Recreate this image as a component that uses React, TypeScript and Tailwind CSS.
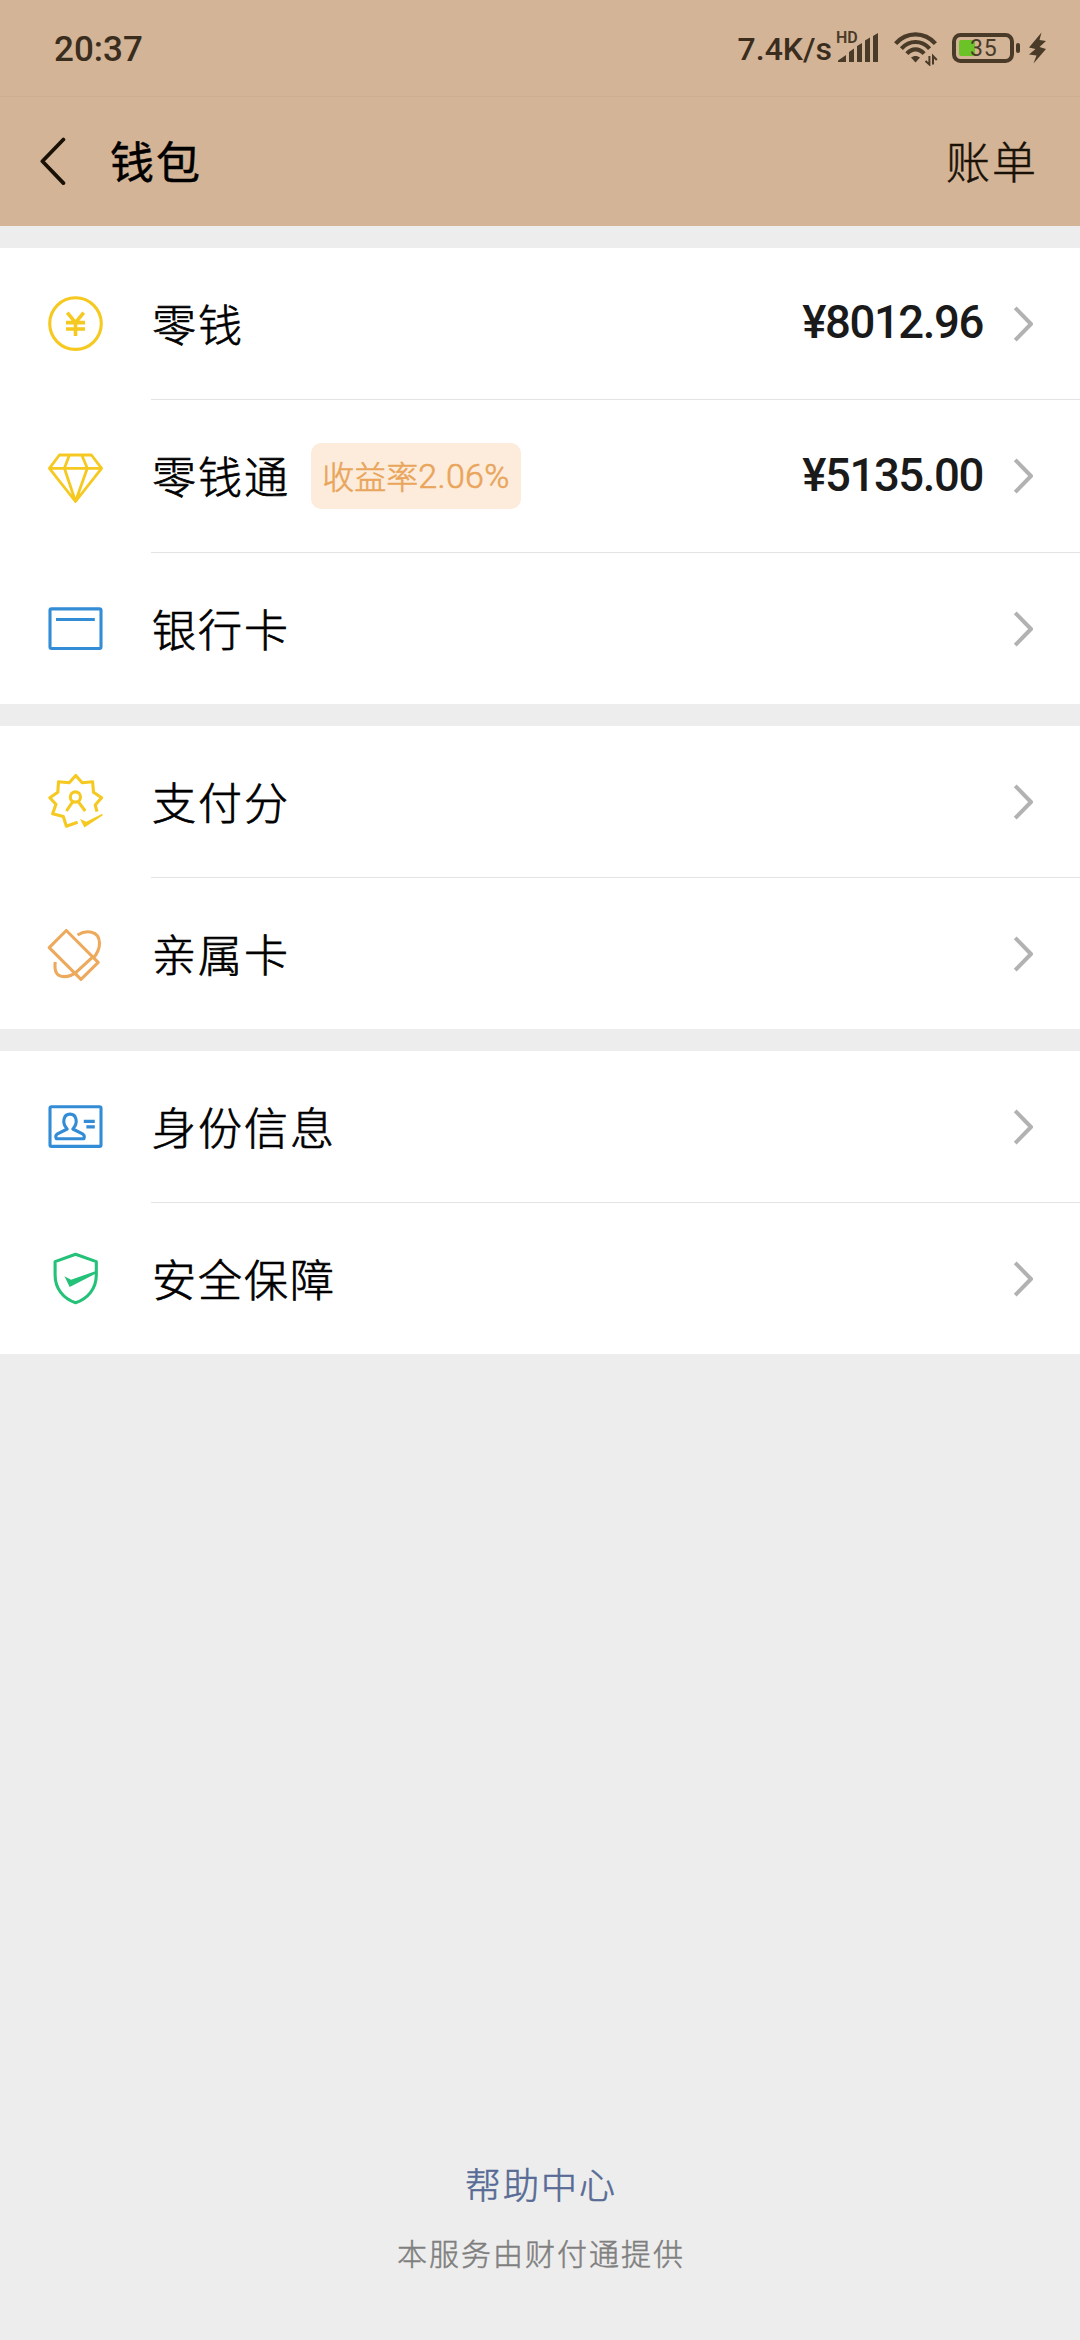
import type { ReactNode } from "react";

const yellow = "#f5c920";
const blue = "#338cd6";

function Icon({ color, children }: { color: string; children: ReactNode }) {
  return (
    <svg className="h-[60px] w-[60px] shrink-0" viewBox="0 0 60 60" fill="none" stroke={color} strokeWidth="3.1" strokeLinejoin="round">
      {children}
    </svg>
  );
}

const CoinIcon = () => (
  <Icon color={yellow}>
    <circle cx="30.5" cy="29.6" r="25.8" />
    <path d="M22.3 18.6 L30.5 28.6 L38.7 18.6 M30.5 28.6 V42 M21 28.6 H40 M21 35 H40" strokeWidth="3.6" strokeLinejoin="miter" />
  </Icon>
);

const DiamondIcon = () => (
  <Icon color={yellow}>
    <path d="M14.4 8 H46.4 L56.6 21.3 L30.5 54.5 L4.4 21.3 Z M4.4 21.3 H56.6 M24.4 8 L19.4 21.3 L30.5 54.5 L42.3 21.3 L36.8 8" strokeWidth="2.8" />
  </Icon>
);

const BankCardIcon = () => (
  <Icon color={blue}>
    <rect x="5" y="9.9" width="51" height="39.6" rx="1.5" />
    <path d="M11 20.5 H49.8" />
  </Icon>
);

const ScoreIcon = () => (
  <Icon color={yellow}>
    <path d="M52 39.6 L50.2 33 L56.6 25.7 L48.5 20.3 L47.6 9.8 L37.2 10.8 L30.7 3.4 L24.2 10.8 L13.5 9.8 L12.8 20.3 L4.8 25.7 L11 32.3 L7.6 41.8 L18.3 44.6 L21.4 54.2 L32.6 50.2" />
    <circle cx="30.4" cy="25" r="5.1" />
    <path d="M27.8 29.6 L21.4 39 M33.2 29.6 L40.2 39" />
    <path d="M35 47 L41.3 49.8 L57.4 41.8 L57.6 43.5 L39.4 55.4 Z" fill={yellow} stroke="none" />
  </Icon>
);

const FamilyCardIcon = () => (
  <Icon color="#eda95c">
    <path d="M21.3 6.5 L4.2 23.7 L36 55.3 L53.2 38.3 Z M31 48.3 L47.6 33.2" />
    <path d="M32.5 11 C41 5.8 54.2 6 54.5 19 C54.6 25 52 30 48 34.5 M10.2 38 C9 48 12 52.6 19 52.6 C24 52.6 28 51 31.5 48" />
  </Icon>
);

const IdentityIcon = () => (
  <Icon color={blue}>
    <rect x="5" y="9.8" width="51" height="39.6" rx="1.5" />
    <path d="M22.2 32 C16.5 26 18.4 17.1 25 17.1 C31.6 17.1 33.5 26 27.8 32 L38 37.2 Q40 38.6 38.9 41.7 H11.3 Q10 38.6 12 37.2 Z" />
    <path d="M38.8 24.4 H49.8 M41.4 29.9 H49.8" strokeWidth="3.2" />
  </Icon>
);

const ShieldIcon = () => (
  <Icon color="#24c178">
    <path d="M30.6 5.2 L51.3 12.6 V26 C51.3 39.5 43 49.5 30.6 53.8 C18.2 49.5 10.1 39.5 10.1 26 V12.6 Z" />
    <path d="M19.5 27.3 L26 30.8 L51 22 V24.6 L24.7 38 Z" fill="#24c178" stroke="none" />
  </Icon>
);

const Chevron = () => (
  <svg className="h-[38px] w-[22px] shrink-0" viewBox="0 0 22 38" fill="none" stroke="#b2b2b2" strokeWidth="4">
    <path d="M3.2 2.8 L19 19 L3.2 35.2" strokeLinejoin="round" />
  </svg>
);

type Item = { icon: ReactNode; label: string; height: string; tag?: [string, string]; amount?: string };

const groups: Item[][] = [
  [
    { icon: <CoinIcon />, label: "零钱", height: "h-[152px]", amount: "¥8012.96" },
    { icon: <DiamondIcon />, label: "零钱通", height: "h-[153px]", tag: ["收益率", "2.06%"], amount: "¥5135.00" },
    { icon: <BankCardIcon />, label: "银行卡", height: "h-[151px]" },
  ],
  [
    { icon: <ScoreIcon />, label: "支付分", height: "h-[152px]" },
    { icon: <FamilyCardIcon />, label: "亲属卡", height: "h-[151px]" },
  ],
  [
    { icon: <IdentityIcon />, label: "身份信息", height: "h-[152px]" },
    { icon: <ShieldIcon />, label: "安全保障", height: "h-[151px]" },
  ],
];

function Row({ item, last }: { item: Item; last: boolean }) {
  return (
    <div className={`flex pl-[45px] ${item.height}`}>
      <div className="flex w-[106px] shrink-0 items-center">{item.icon}</div>
      <div className={last ? "flex flex-1 items-center pr-[46px]" : "flex flex-1 items-center border-b border-[#e3e3e3] pr-[46px]"}>
        <span className="pb-[2px] pl-px text-[44px] leading-none font-light tracking-[2px] text-black [-webkit-text-stroke:0.7px]">{item.label}</span>
        {item.tag && (
          <span className="ml-[21px] flex h-[66px] w-[210px] items-center justify-center rounded-[10px] bg-[#fdecdc] text-[#e9a55b]">
            <span className="pb-[2px] text-[32px] leading-none font-light [-webkit-text-stroke:0.6px]">{item.tag[0]}</span>
            <span className="font-[Roboto] text-[34px] leading-none font-light tracking-[0.3px] [-webkit-text-stroke:0.6px]">{item.tag[1]}</span>
          </span>
        )}
        <span className="mr-[29px] ml-auto pb-px font-[Roboto] text-[45.5px] leading-none font-medium tracking-[-1.4px] text-[#1a1a1a]">{item.amount}</span>
        <Chevron />
      </div>
    </div>
  );
}

function StatusBar() {
  return (
    <div className="flex h-[97px] items-center border-b border-[#ceae8f] pr-[33px] pl-[53px] font-[Roboto] text-[#3a2d1e]">
      <span className="pt-[2px] pl-px text-[35px] leading-none font-medium">20:37</span>
      <span className="ml-auto pt-[2px] text-[32px] leading-none font-medium">7.4K/s</span>
      <div className="relative ml-[4px] h-[34px] w-[43px] text-[#4a3b29]">
        <span className="absolute top-[-1px] left-0 text-[16px] leading-none font-semibold">HD</span>
        <svg className="h-[34px] w-[43px]" viewBox="0 0 43 34" fill="currentColor">
          <path d="M2 31 V29.5 L10 24 V31 Z M13 31 V21 L18 17.5 V31 Z M21 31 V15 L26 12 V31 Z M29 31 V9.5 L34 6.5 V31 Z M37 31 V5 L42 2 V31 Z" />
        </svg>
      </div>
      <svg className="ml-[15px] h-[36px] w-[44px] text-[#4a3b29]" viewBox="0 0 44 36" fill="none" stroke="currentColor" strokeWidth="4.2">
        <path d="M1.6 13.6 C12.5 1.2 30.5 1.2 41.4 13.6 M7.4 18.6 C15.5 9.8 27.5 9.8 35.6 18.6 M12.9 23.6 C18 18 25 18 30.1 23.6" />
        <path d="M21.5 32.5 L17 27.6 C19.5 25.4 23.5 25.4 26 27.6 Z" fill="currentColor" stroke="none" />
        <path d="M35.4 26 V34.5 L31.5 31 M39 34.5 V26 L42.8 30" strokeWidth="2" />
      </svg>
      <div className="relative ml-[14px] h-[30px] w-[69px] text-[#4a3b29]">
        <svg className="h-[30px] w-[69px]" viewBox="0 0 69 30" fill="none">
          <rect x="7" y="7" width="16" height="16" rx="2" fill="#6cc327" />
          <rect x="2" y="2" width="58" height="26" rx="6.5" stroke="currentColor" strokeWidth="4" />
          <rect x="64" y="10" width="4" height="10" rx="2" fill="currentColor" />
        </svg>
        <span className="absolute top-[4px] left-[18px] text-[23px] leading-none tracking-[0.8px]">35</span>
      </div>
      <svg className="ml-[7px] h-[32px] w-[19px] text-[#4a3b29]" viewBox="0 0 19 32" fill="currentColor">
        <path d="M13.5 0.5 L1 15.5 L7.5 17 L1 22.5 L8.5 23.5 L5.5 31.5 L18 17 L11.5 15 L18 9 L11.5 8 Z" />
      </svg>
    </div>
  );
}

export default function App() {
  return (
    <div className="flex h-[2340px] w-[1080px] flex-col overflow-hidden bg-[#ededed] font-['Noto_Sans_CJK_SC',sans-serif]">
      <header className="h-[226px] bg-[#d3b496]">
        <StatusBar />
        <div className="flex h-[129px] items-center pr-[42px] pl-[39px]">
          <svg className="h-[50px] w-[28px]" viewBox="0 0 28 50" fill="none" stroke="#191106" strokeWidth="3.8" strokeLinecap="round" strokeLinejoin="round">
            <path d="M24.4 2.5 L3.4 24.3 L24.4 46.1" />
          </svg>
          <h1 className="ml-[43px] pb-[3px] text-[44px] leading-none font-normal tracking-[2px] text-black [-webkit-text-stroke:0.5px]">钱包</h1>
          <span className="ml-auto pb-[3px] text-[44px] leading-none font-light tracking-[2px] text-[#191106] [-webkit-text-stroke:0.5px]">账单</span>
        </div>
      </header>
      <main className="flex flex-col gap-[22px] pt-[22px]">
        {groups.map((items, g) => (
          <section key={g} className="bg-white">
            {items.map((item, i) => (
              <Row key={item.label} item={item} last={i === items.length - 1} />
            ))}
          </section>
        ))}
      </main>
      <footer className="mt-auto flex flex-col items-center pb-[73px]">
        <a className="pl-[2px] text-[36px] leading-none font-light tracking-[2px] text-[#576b95] [-webkit-text-stroke:0.6px]">帮助中心</a>
        <p className="mt-[36px] pl-[2px] text-[30px] leading-none font-light tracking-[2px] text-[#7f7f7f] [-webkit-text-stroke:0.5px]">本服务由财付通提供</p>
      </footer>
    </div>
  );
}
